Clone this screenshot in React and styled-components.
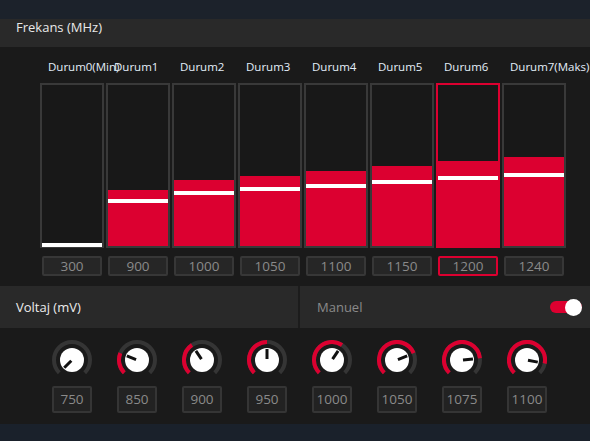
import React from 'react'
import styled, { createGlobalStyle } from 'styled-components'

const RED = '#dc0030'

const GlobalStyle = createGlobalStyle`
  html, body {
    margin: 0;
    padding: 0;
    background: #1a212b;
  }
  body {
    font-family: 'Open Sans', 'Noto Sans', sans-serif;
  }
`

const states = [
  { label: 'Durum0(Min)', value: 300, fill: 0, marker: -1 },
  { label: 'Durum1', value: 900, fill: 56, marker: 43 },
  { label: 'Durum2', value: 1000, fill: 66, marker: 51 },
  { label: 'Durum3', value: 1050, fill: 70, marker: 55 },
  { label: 'Durum4', value: 1100, fill: 75, marker: 58 },
  { label: 'Durum5', value: 1150, fill: 80, marker: 62 },
  { label: 'Durum6', value: 1200, fill: 85, marker: 66, active: true },
  { label: 'Durum7(Maks)', value: 1240, fill: 89, marker: 69 },
]

const voltages = [750, 850, 900, 950, 1000, 1050, 1075, 1100]

const MIN_V = 750
const MAX_V = 1150

const polar = (deg, r) => {
  const rad = (deg * Math.PI) / 180
  return [20 + r * Math.sin(rad), 20 - r * Math.cos(rad)]
}

const arcPath = (from, to, r) => {
  const [x1, y1] = polar(from, r)
  const [x2, y2] = polar(to, r)
  const large = to - from > 180 ? 1 : 0
  return `M ${x1} ${y1} A ${r} ${r} 0 ${large} 1 ${x2} ${y2}`
}

const Knob = ({ value }) => {
  const angle = -135 + ((value - MIN_V) / (MAX_V - MIN_V)) * 270
  const [lx1, ly1] = polar(angle, 1)
  const [lx2, ly2] = polar(angle, 11)
  return (
    <svg width='40' height='40' viewBox='0 0 40 40'>
      <path d={arcPath(-135, 135, 18)} fill='none' stroke='#353535' strokeWidth='4' />
      {angle > -135 && (
        <path d={arcPath(-135, angle, 18)} fill='none' stroke={RED} strokeWidth='4' />
      )}
      <circle cx='20' cy='20' r='12' fill='#fff' />
      <line x1={lx1} y1={ly1} x2={lx2} y2={ly2} stroke='#111' strokeWidth='3' strokeLinecap='butt' />
    </svg>
  )
}

const App = () => {
  return (
    <Screen>
      <GlobalStyle />
      <TopBand />
      <SectionHeader>Frekans (MHz)</SectionHeader>
      <FreqBody>
        {states.map((s) => (
          <StateColumn key={s.label}>
            <StateLabel>{s.label}</StateLabel>
            <Bar $active={s.active}>
              <Fill style={{ height: s.fill }} />
              <Marker style={{ bottom: s.marker }} />
            </Bar>
            <ValueBox $active={s.active}>{s.value}</ValueBox>
          </StateColumn>
        ))}
      </FreqBody>
      <VoltHeader>
        <VoltTitle>Voltaj (mV)</VoltTitle>
        <ModeCell>
          <ModeText>Manuel</ModeText>
          <Toggle>
            <ToggleThumb />
          </Toggle>
        </ModeCell>
      </VoltHeader>
      <KnobRow>
        {voltages.map((v) => (
          <KnobItem key={v}>
            <Knob value={v} />
            <KnobValue>{v}</KnobValue>
          </KnobItem>
        ))}
      </KnobRow>
      <BottomBand />
    </Screen>
  )
}

const Screen = styled.div`
  width: 590px;
  height: 441px;
  display: flex;
  flex-direction: column;
  overflow: hidden;
  background: #1a1a1a;
`

const TopBand = styled.div`
  height: 19px;
  background: #1c222b;
`

const SectionHeader = styled.div`
  height: 28px;
  box-sizing: border-box;
  padding-left: 16px;
  line-height: 16px;
  font-size: 13px;
  color: #e8e8e8;
  background: #292929;
`

const FreqBody = styled.div`
  height: 239px;
  box-sizing: border-box;
  display: flex;
  gap: 2px;
  padding-left: 40px;
  background: #1a1a1a;
`

const StateColumn = styled.div`
  width: 64px;
  display: flex;
  flex-direction: column;
  padding-top: 12px;
`

const StateLabel = styled.div`
  height: 16px;
  line-height: 16px;
  padding-left: 8px;
  margin-bottom: 8px;
  font-size: 11.5px;
  color: #e4eef9;
  white-space: nowrap;
`

const Bar = styled.div`
  position: relative;
  height: 165px;
  box-sizing: border-box;
  border: 2px solid ${(p) => (p.$active ? RED : '#393939')};
  background: #181818;
  display: flex;
  flex-direction: column;
  justify-content: flex-end;
`

const Fill = styled.div`
  background: ${RED};
`

const Marker = styled.div`
  position: absolute;
  left: 0;
  right: 0;
  height: 4px;
  background: #fff;
`

const ValueBox = styled.div`
  margin: 8px 2px 0;
  height: 20px;
  box-sizing: border-box;
  border: 2px solid ${(p) => (p.$active ? RED : '#373737')};
  border-radius: 2px;
  background: #262626;
  color: #8a8a8a;
  font-size: 13.5px;
  line-height: 16px;
  text-align: center;
`

const VoltHeader = styled.div`
  height: 42px;
  display: flex;
  gap: 2px;
  background: #1c1c1c;
`

const VoltTitle = styled.div`
  width: 298px;
  box-sizing: border-box;
  padding-left: 16px;
  display: flex;
  align-items: center;
  background: #292929;
  color: #ececec;
  font-size: 13px;
`

const ModeCell = styled.div`
  flex: 1;
  display: flex;
  align-items: center;
  justify-content: space-between;
  padding: 0 8px 0 17px;
  background: #292929;
`

const ModeText = styled.span`
  color: #8a8a8a;
  font-size: 13px;
`

const Toggle = styled.div`
  width: 32px;
  height: 12px;
  border-radius: 6px;
  background: ${RED};
  display: flex;
  align-items: center;
  justify-content: flex-end;
`

const ToggleThumb = styled.div`
  width: 17px;
  height: 17px;
  border-radius: 50%;
  background: #fff;
`

const KnobRow = styled.div`
  height: 96px;
  box-sizing: border-box;
  display: flex;
  gap: 25px;
  padding: 12px 0 0 52px;
  background: #1a1a1a;
`

const KnobItem = styled.div`
  width: 40px;
  display: flex;
  flex-direction: column;
  align-items: center;
  gap: 6px;
`

const KnobValue = styled.div`
  width: 40px;
  height: 27px;
  box-sizing: border-box;
  border: 2px solid #353535;
  border-radius: 2px;
  background: #222;
  color: #8a8a8a;
  font-size: 13.5px;
  line-height: 23px;
  text-align: center;
`

const BottomBand = styled.div`
  flex: 1;
  background: #1a212b;
`

export default App
